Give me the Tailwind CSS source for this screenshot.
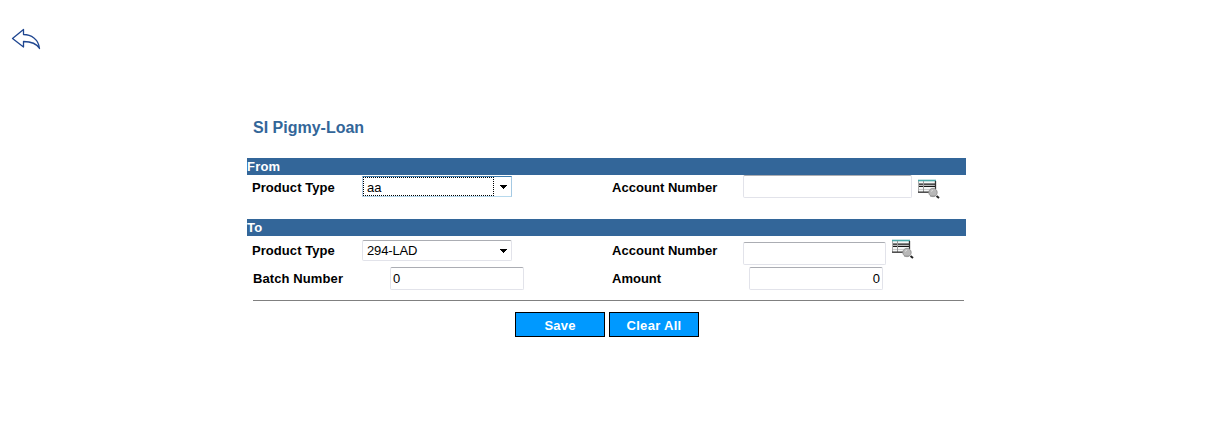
<!DOCTYPE html>
<html lang="en">
<head>
<meta charset="utf-8">
<title>SI Pigmy-Loan</title>
<script src="https://cdn.jsdelivr.net/npm/@tailwindcss/browser@4"></script>
</head>
<body class="h-[440px] w-[1213px] overflow-hidden bg-white font-['Liberation_Sans',Arial,sans-serif] text-[13px] leading-[17px] text-black">
<svg width="0" height="0" class="hidden">
  <symbol id="lookup" viewBox="0 0 22 21">
    <path d="M.5 1.5h17v12H.5z" fill="#f4f6f6" stroke="#aaa"/>
    <path d="M0 1.5h18" stroke="#4aa9a9" stroke-width="1.6"/>
    <path d="M1 5.2h16M1 7.4h16" stroke="#151515" stroke-width="1.3"/>
    <path d="M1 10.5h11" stroke="#ccc"/>
    <path d="M5.5 2v11" stroke="#999"/>
    <path d="M0 13.2h11M17.5 2v8" stroke="#333" stroke-width="1.3"/>
    <circle cx="15" cy="13.5" r="4.2" fill="#b8b8b8" stroke="#8a8a8a" stroke-width=".8"/>
    <path d="M13 12.5l2-1.5" stroke="#ddd"/>
    <path d="M12 17h5" stroke="#999"/>
    <path d="M18.5 17l2.5 2" stroke="#222" stroke-width="2"/>
  </symbol>
</svg>
<header class="h-[118px] pt-[28px] pl-[11px]">
  <svg width="30" height="22" viewBox="0 0 30 22" fill="none" stroke="#1f4690" stroke-width="1.3" stroke-linejoin="round">
    <path d="M1.5 10.5L12.5 1.5V6.5C20 6.5 27.5 11 28.5 20.5C25 14.5 19 13.5 12.5 13.5V19Z"/>
  </svg>
</header>
<main class="ml-[247px] w-[719px]">
  <h1 class="h-[40px] pl-[6px] text-[16px] leading-[19px] font-bold text-[#336699]">SI Pigmy-Loan</h1>
  <h2 class="h-[17px] bg-[#336699] font-bold tracking-[0.2px] text-white">From</h2>
  <section class="flex h-[44px] items-start">
    <label class="w-[115px] pt-[4px] pl-[5px] font-bold tracking-[0.06px]">Product Type</label>
    <div class="mt-px flex h-[21px] w-[150px] border border-t-[#3d7bad] border-r-[#a4c9e3] border-b-[#b7d9ed] border-l-[#b5cfe7]">
      <div class="w-[131px] border border-dotted border-black pt-px pl-[3px]">aa</div>
      <svg class="mt-[8px] ml-[6px]" width="7" height="4" shape-rendering="crispEdges"><path d="M0 0h7v1H0zM1 1h5v1H1zM2 2h3v1H2zM3 3h1v1H3z"/></svg>
    </div>
    <label class="ml-[100px] w-[131px] pt-[4px] font-bold tracking-[0.04px]">Account Number</label>
    <div class="h-[23px] w-[169px] rounded-[2px] border border-[#e2e3ea] border-t-[#abadb3]"></div>
    <svg class="mt-[4px] ml-[6px]" width="22" height="21"><use href="#lookup"/></svg>
  </section>
  <h2 class="h-[17px] bg-[#336699] font-bold tracking-[0.2px] text-white">To</h2>
  <section class="flex h-[31px] items-start">
    <label class="w-[115px] pt-[6px] pl-[5px] font-bold tracking-[0.06px]">Product Type</label>
    <div class="mt-[4px] flex h-[21px] w-[150px] rounded-[2px] border border-[#e2e3ea] border-t-[#abadb3]">
      <div class="w-[131px] pt-px pl-[4px] tracking-[-0.15px]">294-LAD</div>
      <svg class="mt-[8px] ml-[6px]" width="7" height="4" shape-rendering="crispEdges"><path d="M0 0h7v1H0zM1 1h5v1H1zM2 2h3v1H2zM3 3h1v1H3z"/></svg>
    </div>
    <label class="ml-[100px] w-[131px] pt-[6px] font-bold tracking-[0.04px]">Account Number</label>
    <div class="mt-[6px] h-[23px] w-[143px] rounded-[2px] border border-[#e2e3ea] border-t-[#abadb3]"></div>
    <svg class="mt-[3px] ml-[6px]" width="22" height="21"><use href="#lookup"/></svg>
  </section>
  <section class="flex h-[33px] items-start">
    <label class="w-[143px] pt-[3px] pl-[6px] font-bold tracking-[0.1px]">Batch Number</label>
    <div class="h-[23px] w-[134px] rounded-[2px] border border-[#e2e3ea] border-t-[#abadb3] pt-[2px] pl-[2px]">0</div>
    <label class="ml-[88px] w-[137px] pt-[3px] font-bold">Amount</label>
    <div class="h-[23px] w-[134px] rounded-[2px] border border-[#e2e3ea] border-t-[#abadb3] pt-[2px] pr-[2px] text-right">0</div>
  </section>
  <hr class="ml-[6px] w-[711px] border-[#808080]">
  <div class="flex gap-[4px] pt-[11px] pl-[268px]">
    <button class="h-[25px] w-[90px] border border-black bg-[#0099ff] pt-[2px] font-bold tracking-[0.2px] text-white">Save</button>
    <button class="h-[25px] w-[90px] border border-black bg-[#0099ff] pt-[2px] font-bold tracking-[0.3px] text-white">Clear All</button>
  </div>
</main>
</body>
</html>
